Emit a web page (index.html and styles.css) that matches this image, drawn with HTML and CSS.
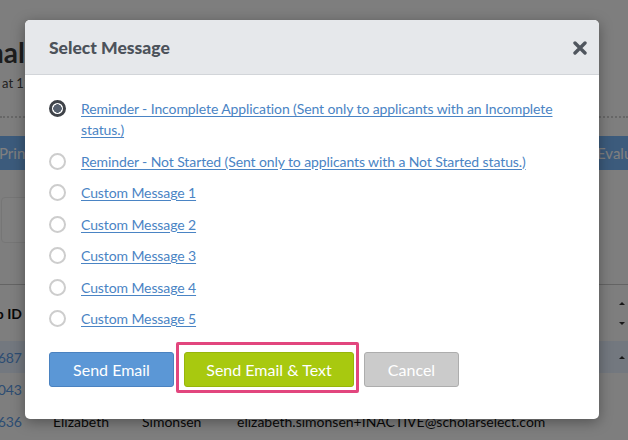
FILE: index.html
```html
<!DOCTYPE html>
<html lang="en">
<head>
<meta charset="utf-8">
<title>Select Message</title>
<link rel="stylesheet" href="styles.css">
</head>
<body>
<div class="page">
  <div class="title-row">
    <div class="title-lead">Final</div>
    <div class="title-rest">Evaluations</div>
  </div>
  <div class="subtitle">at 11:59 PM EST</div>
  <div class="dotted"></div>
  <div class="toolbar">
    <div class="tb-left"><span class="pbtn pbtn-print">Print</span></div>
    <div class="tb-right"><span class="pbtn pbtn-eval">Evaluators</span></div>
  </div>
  <div class="search"></div>
  <div class="table">
    <div class="trow thead">
      <div class="c1">App ID</div><div class="c2">First</div><div class="c3">Last</div><div class="c4">Email</div>
      <div class="c5"><span class="sort"><span class="up"></span><span class="down"></span></span></div>
    </div>
    <div class="trow hl">
      <div class="c1"><span class="idlink">10687</span></div><div class="c2">Anna</div><div class="c3">Lopez</div><div class="c4">anna.lopez@scholarselect.com</div>
      <div class="c5"><span class="up"></span></div>
    </div>
    <div class="trow">
      <div class="c1"><span class="idlink">11043</span></div><div class="c2">Mark</div><div class="c3">Jensen</div><div class="c4">mark.jensen@scholarselect.com</div>
      <div class="c5"></div>
    </div>
    <div class="trow">
      <div class="c1"><span class="idlink">10636</span></div><div class="c2">Elizabeth</div><div class="c3">Simonsen</div><div class="c4">elizabeth.simonsen+INACTIVE@scholarselect.com</div>
      <div class="c5"></div>
    </div>
  </div>
  <div class="backdrop"></div>
  <div class="modal">
    <div class="modal-head">
      <h2 class="modal-title">Select Message</h2>
      <span class="close" aria-label="Close">
        <svg width="14" height="14" viewBox="0 0 14 14"><path d="M2 2 L12 12 M12 2 L2 12" stroke="#50565e" stroke-width="3.4" stroke-linecap="round"/></svg>
      </span>
    </div>
    <div class="modal-body">
      <ul class="options">
        <li class="opt"><span class="radio checked"></span><a class="olink" href="#">Reminder - Incomplete Application (Sent only to applicants with an Incomplete status.)</a></li>
        <li class="opt"><span class="radio"></span><a class="olink" href="#">Reminder - Not Started (Sent only to applicants with a Not Started status.)</a></li>
        <li class="opt"><span class="radio"></span><a class="olink" href="#">Custom Message 1</a></li>
        <li class="opt"><span class="radio"></span><a class="olink" href="#">Custom Message 2</a></li>
        <li class="opt"><span class="radio"></span><a class="olink" href="#">Custom Message 3</a></li>
        <li class="opt"><span class="radio"></span><a class="olink" href="#">Custom Message 4</a></li>
        <li class="opt"><span class="radio"></span><a class="olink" href="#">Custom Message 5</a></li>
      </ul>
      <div class="actions">
        <button class="btn btn-blue">Send Email</button>
        <button class="btn btn-green">Send Email &amp; Text</button>
        <button class="btn btn-gray">Cancel</button>
        <span class="highlight"></span>
      </div>
    </div>
  </div>
</div>
</body>
</html>
```
FILE: styles.css
```css
* { box-sizing: border-box; }
html, body { margin: 0; padding: 0; }
body { width: 628px; height: 440px; overflow: hidden; font-family: Lato, "Liberation Sans", sans-serif; }

.page { position: relative; width: 628px; height: 440px; overflow: hidden; background: #fdfdfd; color: #333; }

.title-row { display: flex; padding-top: 35px; font-weight: 700; font-size: 28px; line-height: 34px; color: #3a3a3a; white-space: nowrap; }
.title-lead { width: 200px; margin-left: -175px; text-align: right; }
.title-rest { margin-left: 8px; }

.subtitle { margin-top: 6px; margin-left: 2px; font-size: 13px; line-height: 16px; color: #444; white-space: nowrap; }

.dotted { margin-top: 25px; border-top: 2px dotted #cfcfcf; }

.toolbar { display: grid; grid-template-columns: 586px auto; margin-top: 18px; height: 34px; }
.pbtn { display: inline-block; height: 34px; line-height: 34px; background: #78b6f8; color: #fff; font-size: 15px; border-radius: 3px; white-space: nowrap; }
.pbtn-print { margin-left: -12px; padding: 0 40px 0 11px; }
.pbtn-eval { padding: 0 40px 0 11px; }

.search { margin-top: 27px; height: 46px; width: 220px; margin-left: 1px; border: 1px solid #ececec; border-radius: 4px; background: #fff; }

.table { margin-top: 41px; margin-left: -40px; width: 668px; font-size: 14px; }
.trow { display: grid; grid-template-columns: 85px 89px 95px 1fr 30px; height: 32px; align-items: center; color: #111; white-space: nowrap; }
.thead { height: 57px; border-top: 1px solid #c8c8c8; font-weight: 700; }
.hl { background: #e6f0ff; }
.c1 { text-align: right; padding-right: 23px; overflow: hidden; }
.c2, .c3, .c4 { padding-left: 8px; overflow: hidden; }
.c5 { display: flex; justify-content: flex-end; padding-right: 3px; }
.idlink { color: #5a9ae6; }
.sort { display: flex; flex-direction: column; gap: 17px; }
.up { width: 0; height: 0; border-left: 3px solid transparent; border-right: 3px solid transparent; border-bottom: 3px solid #333; }
.down { width: 0; height: 0; border-left: 3px solid transparent; border-right: 3px solid transparent; border-top: 3px solid #333; }

.backdrop { position: absolute; inset: 0; background: rgba(0, 0, 0, 0.5); }

.modal { position: absolute; left: 25px; top: 20px; width: 574px; height: 399px; background: #fff; border-radius: 5px; box-shadow: 0 3px 14px rgba(0, 0, 0, 0.35); overflow: hidden; }
.modal-head { height: 55px; background: #e6e8eb; border-bottom: 1px solid #d2d5d9; display: flex; align-items: center; justify-content: space-between; padding: 0 12px 0 24px; }
.modal-title { margin: 0; font-size: 17.5px; font-weight: 900; color: #4c525a; }
.close { display: flex; width: 14px; height: 14px; margin-top: 1px; }

.modal-body { padding: 23px 24px 0 24px; }
.options { list-style: none; margin: 0; padding: 0; display: flex; flex-direction: column; gap: 10.5px; }
.opt { display: flex; align-items: flex-start; gap: 15px; font-size: 14px; line-height: 21px; letter-spacing: -0.1px; }
.radio { flex: 0 0 17px; width: 17px; height: 17px; margin-top: 2px; border-radius: 50%; border: 2px solid #cdcdcd; background: #fff; }
.radio.checked { border: 3px solid #3f4349; background: radial-gradient(circle, #56606e 0 4px, #fff 4.5px); }
.olink { color: #4a84c4; text-decoration: underline; text-underline-offset: 2px; }

.actions { position: relative; display: flex; gap: 10px; margin-top: 23px; }
.btn { height: 35px; border-radius: 3px; font-family: inherit; font-size: 16px; color: #fff; padding: 0; cursor: pointer; }
.btn-blue { width: 125px; background: #5b97d6; border: 1px solid #4a82c0; }
.btn-green { width: 170px; background: #a8c90f; border: 1px solid #97b50b; }
.btn-gray { width: 95px; background: #cbcbcb; border: 1px solid #adadad; }
.highlight { position: absolute; left: 127px; top: -10px; width: 183px; height: 51px; border: 3px solid #e2467e; border-radius: 2px; pointer-events: none; }
```
